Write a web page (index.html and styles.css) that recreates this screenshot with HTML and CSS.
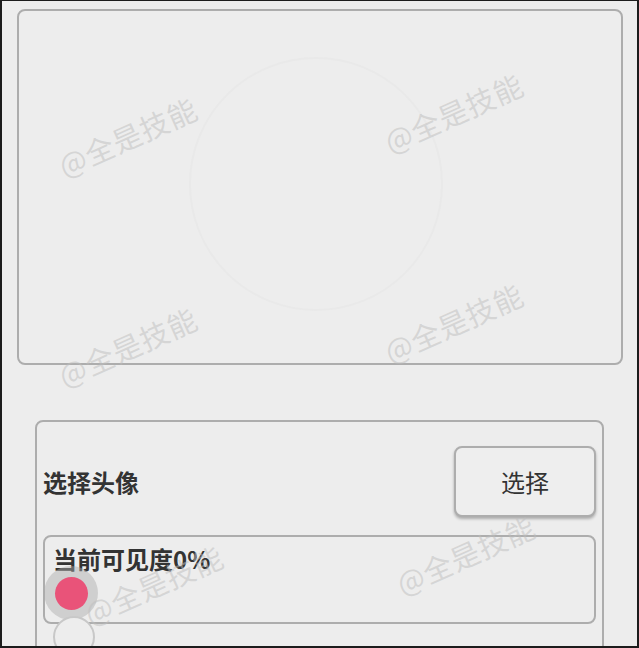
FILE: index.html
```html
<!DOCTYPE html>
<html lang="zh">
<head>
<meta charset="utf-8">
<link rel="stylesheet" href="styles.css">
</head>
<body>
<div class="screen">
  <div class="preview">
    <div class="ring"></div>
  </div>
  <div class="panel">
    <div class="row">
      <span class="label">选择头像</span>
      <button class="btn">选择</button>
    </div>
    <div class="opacity">
      <div class="opacity-title">当前可见度0%</div>
      <div class="halo"></div>
      <div class="thumb"></div>
    </div>
    <div class="thumb2"></div>
  </div>
  <span class="wm wm1">@全是技能</span>
  <span class="wm wm2">@全是技能</span>
  <span class="wm wm3">@全是技能</span>
  <span class="wm wm4">@全是技能</span>
  <span class="wm wm5">@全是技能</span>
  <span class="wm wm6">@全是技能</span>
</div>
</body>
</html>
```
FILE: styles.css
```css
html, body {
  margin: 0;
  padding: 0;
  background: #1c1c1c;
}
.screen {
  position: relative;
  box-sizing: border-box;
  width: 639px;
  height: 648px;
  overflow: hidden;
  background: #ededed;
  border-left: 2px solid #1c1c1c;
  border-top: 1px solid #1c1c1c;
  border-right: 2px solid #1c1c1c;
  border-bottom: 2px solid #1c1c1c;
  padding: 8px 14px 0 15px;
  font-family: "Noto Sans CJK SC", "Noto Sans", sans-serif;
  color: #333;
}
.preview {
  box-sizing: border-box;
  height: 356px;
  border: 2px solid #adadad;
  border-radius: 8px;
  display: flex;
  align-items: center;
  justify-content: center;
}
.ring {
  width: 250px;
  height: 250px;
  border-radius: 50%;
  border: 2px solid #e9e9e9;
  margin-left: -8px;
  margin-top: -6px;
}
.panel {
  position: relative;
  box-sizing: border-box;
  margin: 55px 19px 0 18px;
  height: 260px;
  border: 2px solid #adadad;
  border-radius: 8px;
  padding: 24px 6px 0 6px;
}
.row {
  display: flex;
  align-items: center;
  justify-content: space-between;
}
.label {
  font-size: 24px;
  font-weight: 700;
  line-height: 30px;
  margin-top: 0;
}
.btn {
  box-sizing: border-box;
  width: 142px;
  height: 71px;
  border: 2px solid #adadad;
  border-radius: 8px;
  background: #eeeeee;
  box-shadow: 0 2px 3px rgba(0,0,0,0.28);
  font-family: inherit;
  font-size: 24px;
  color: #333;
  padding: 0;
}
.opacity {
  position: relative;
  box-sizing: border-box;
  margin-top: 18px;
  height: 89px;
  border: 2px solid #adadad;
  border-radius: 8px;
  padding: 7px 0 0 8px;
}
.opacity-title {
  font-size: 24px;
  font-weight: 700;
  line-height: 30px;
}
.halo {
  position: absolute;
  left: -1px;
  top: 29px;
  width: 54px;
  height: 54px;
  border-radius: 50%;
  background: rgba(170,170,170,0.45);
}
.thumb {
  position: absolute;
  left: 10px;
  top: 40px;
  width: 33px;
  height: 33px;
  border-radius: 50%;
  background: #e95379;
}
.thumb2 {
  position: absolute;
  left: 16px;
  top: 194px;
  width: 38px;
  height: 38px;
  border-radius: 50%;
  border: 2px solid #c8c8c8;
  background: #ededed;
}
.wm {
  position: absolute;
  font-size: 29px;
  color: rgba(190,190,190,0.5);
  transform: rotate(-24deg);
  transform-origin: left bottom;
  white-space: nowrap;
  pointer-events: none;
  letter-spacing: 1px;
}
.wm1 { left: 66px; top: 142px; }
.wm2 { left: 392px; top: 118px; }
.wm3 { left: 66px; top: 352px; }
.wm4 { left: 392px; top: 328px; }
.wm5 { left: 404px; top: 560px; }
.wm6 { left: 92px; top: 590px; }
```
